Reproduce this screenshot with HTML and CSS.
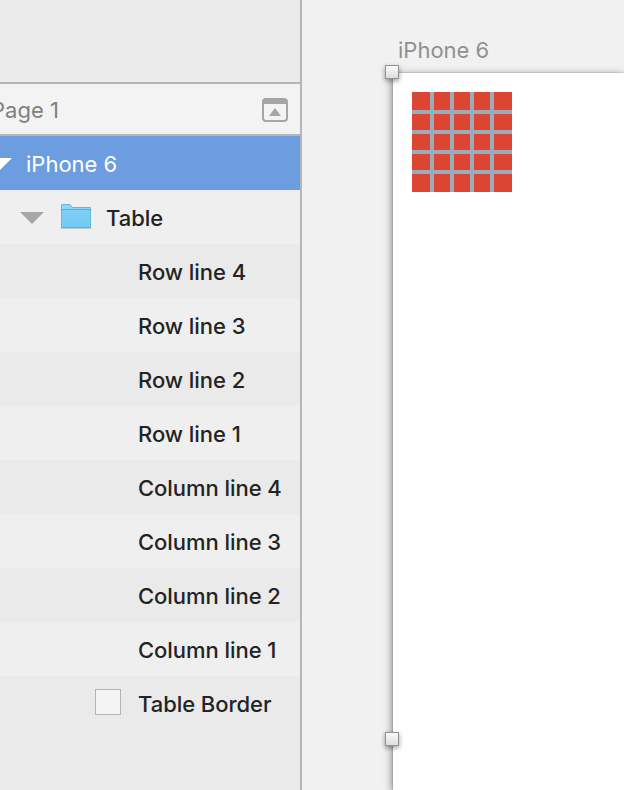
FILE: index.html
```html
<!DOCTYPE html>
<html lang="en">
<head>
<meta charset="utf-8">
<title>Layers</title>
<link rel="stylesheet" href="styles.css">
</head>
<body>
<div class="app">
  <aside class="sidebar">
    <div class="spacer"></div>
    <header class="pages">
      <span class="page-name">Page 1</span>
      <svg class="collapse" width="26" height="24" viewBox="0 0 26 24"><rect x="1" y="1" width="24" height="22" rx="3" fill="none" stroke="#a5a5a5" stroke-width="2"/><path d="M1 3q0-2 2-2h20q2 0 2 2v3H1z" fill="#a5a5a5"/><path d="M13 10l6 8H7z" fill="#a5a5a5"/></svg>
    </header>
    <ul class="layers">
      <li class="row selected">
        <svg class="arrow" width="24" height="12" viewBox="0 0 24 12"><path d="M0 0h24L12 12z" fill="#fff"/></svg>
        <span class="label">iPhone 6</span>
      </li>
      <li class="row group">
        <svg class="arrow" width="24" height="12" viewBox="0 0 24 12"><path d="M0 0h24L12 12z" fill="#a6a6a6"/></svg>
        <svg class="folder" width="32" height="27" viewBox="0 0 32 27">
          <defs><linearGradient id="front" x1="0" y1="0" x2="0" y2="1"><stop offset="0" stop-color="#7fd0f5"/><stop offset="1" stop-color="#72cbf6"/></linearGradient></defs>
          <path d="M1 25.500h30" stroke="#c3c8cb"/>
          <path d="M1 24V2q0-1 1-1h8l2.500 3H30q1 0 1 1v19z" fill="#8fd6fa"/>
          <path d="M1 6h30v18H1z" fill="url(#front)"/>
          <path d="M1.500 24V2q0-.5 1-.5h7.500l2.500 3H30q.5 0 .5.500V24" fill="none" stroke="#65b9df"/>
          <path d="M1 6.500h30M1 24.500h30" stroke="#5eb1d6"/>
        </svg>
        <span class="label">Table</span>
      </li>
      <li class="row child"><span class="label">Row line 4</span></li>
      <li class="row child"><span class="label">Row line 3</span></li>
      <li class="row child"><span class="label">Row line 2</span></li>
      <li class="row child"><span class="label">Row line 1</span></li>
      <li class="row child"><span class="label">Column line 4</span></li>
      <li class="row child"><span class="label">Column line 3</span></li>
      <li class="row child"><span class="label">Column line 2</span></li>
      <li class="row child"><span class="label">Column line 1</span></li>
      <li class="row child shape"><span class="swatch"></span><span class="label">Table Border</span></li>
    </ul>
  </aside>
  <main class="canvas">
    <div class="title">iPhone 6</div>
    <section class="artboard">
      <i class="handle top"></i>
      <i class="handle middle"></i>
      <div class="table">
        <i></i><i></i><i></i><i></i><i></i>
        <i></i><i></i><i></i><i></i><i></i>
        <i></i><i></i><i></i><i></i><i></i>
        <i></i><i></i><i></i><i></i><i></i>
        <i></i><i></i><i></i><i></i><i></i>
      </div>
    </section>
  </main>
</div>
</body>
</html>
```
FILE: styles.css
```css
* { box-sizing: border-box; }
body { margin: 0; font: 22px/26px Inter, "Liberation Sans", sans-serif; color: #232323; }
.app { display: flex; width: 624px; height: 790px; overflow: hidden; }
.sidebar { flex: none; width: 302px; border-right: 2px solid #b6b6b6; background: #ebebeb; overflow: hidden; white-space: nowrap; }
.spacer { height: 82px; }
.pages { display: flex; align-items: center; justify-content: space-between; height: 54px; padding: 2px 12px 0 0; border: solid #b6b6b6; border-width: 2px 0; background: #f3f3f3; color: #808080; }
.page-name { margin-left: -9px; }
.layers { margin: 0; padding: 0; list-style: none; }
.row { display: flex; align-items: center; height: 54px; background: #eaeaea; }
.row:nth-child(even) { background: #efefef; }
.row .label { padding-top: 2px; font-weight: 450; letter-spacing: -0.05px; }
.row.selected { background: #6c9de1; color: #fff; }
.row.selected .label { font-weight: 400; letter-spacing: 0; }
.selected .arrow { margin: 2px 14px 0 -12px; }
.group { padding-left: 20px; }
.group .arrow { margin: 2px 16px 0 0; }
.folder { margin: 0 14px 2px 0; }
.child { padding-left: 138px; }
.row.shape { padding-left: 95px; }
.swatch { width: 26px; height: 26px; margin: 0 17px 2px 0; border: 1px solid #b4b4b4; background: #f3f3f3; }
.canvas { flex: 1; min-width: 0; padding: 37px 0 0 91px; background: #f1f1f1; overflow: hidden; }
.title { height: 36px; padding-left: 5px; color: #8f918f; }
.artboard { position: relative; height: 717px; padding: 19px; background: #fff; box-shadow: 0 0 1px 1px rgba(0,0,0,.08), -1px 2px 8px rgba(0,0,0,.45); }
.handle { position: absolute; left: -8px; width: 14px; height: 14px; border: 1px solid #929292; background: linear-gradient(#fafafa, #dedede); box-shadow: 0 2px 5px rgba(0,0,0,.4); }
.top { top: -8px; }
.middle { top: 659px; }
.table { display: grid; grid-template: 18px repeat(3, 16px) 18px / 18px repeat(3, 16px) 18px; gap: 4px; width: 100px; height: 100px; background: #9aabba; }
.table i { background: #dc4433; }
```
